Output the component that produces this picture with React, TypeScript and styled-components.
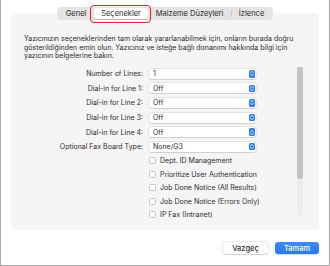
import React from "react"
import styled, { createGlobalStyle } from "styled-components"

const GlobalStyle = createGlobalStyle`
  html, body {
    margin: 0;
    padding: 0;
    background: #ffffff;
  }
  body {
    font-family: "Inter", "Liberation Sans", sans-serif;
    color: #262626;
    -webkit-font-smoothing: antialiased;
  }
`

const tabs = ["Genel", "Seçenekler", "Malzeme Düzeyleri", "İzlence"]

const lines = [
  { label: "Number of Lines:", value: "1" },
  { label: "Dial-in for Line 1:", value: "Off" },
  { label: "Dial-in for Line 2:", value: "Off" },
  { label: "Dial-in for Line 3:", value: "Off" },
  { label: "Dial-in for Line 4:", value: "Off" },
  { label: "Optional Fax Board Type:", value: "None/G3" },
]

const options = [
  "Dept. ID Management",
  "Prioritize User Authentication",
  "Job Done Notice (All Results)",
  "Job Done Notice (Errors Only)",
  "IP Fax (Intranet)",
]

const Stepper = () => (
  <StepperBox>
    <svg width="6" height="7" viewBox="0 0 6 7">
      <path d="M1.6 2.7 L3 1.3 L4.4 2.7" fill="none" stroke="#fff" strokeWidth="0.8" strokeLinecap="round" strokeLinejoin="round" />
      <path d="M1.6 4.3 L3 5.7 L4.4 4.3" fill="none" stroke="#fff" strokeWidth="0.8" strokeLinecap="round" strokeLinejoin="round" />
    </svg>
  </StepperBox>
)

const App = () => {
  return (
    <>
      <GlobalStyle />
      <Window>
        <TabBar>
          {tabs.map((t, i) => (
            <Tab key={t} active={i === 1}>
              {i === 3 && <Divider />}
              {t}
              {i === 1 && <Highlight />}
            </Tab>
          ))}
        </TabBar>
        <Panel>
          <Intro>
            Yazıcınızın seçeneklerinden tam olarak yararlanabilmek için, onların burada doğru
            gösterildiğinden emin olun. Yazıcınız ve isteğe bağlı donanımı hakkında bilgi için
            yazıcının belgelerine bakın.
          </Intro>
          <ScrollArea>
            <FormList>
              {lines.map((l) => (
                <FormRow key={l.label}>
                  <Label>{l.label}</Label>
                  <Select>
                    <span>{l.value}</span>
                    <Stepper />
                  </Select>
                </FormRow>
              ))}
              {options.map((o) => (
                <CheckRow key={o}>
                  <span />
                  <CheckLabel>
                    <Box />
                    {o}
                  </CheckLabel>
                </CheckRow>
              ))}
            </FormList>
            <ScrollTrack>
              <ScrollThumb />
            </ScrollTrack>
          </ScrollArea>
        </Panel>
        <Footer>
          <Button>Vazgeç</Button>
          <Button primary>Tamam</Button>
        </Footer>
      </Window>
    </>
  )
}

export default App

const Window = styled.div`
  width: 330px;
  height: 266px;
  box-sizing: border-box;
  border: 1px solid #a9a9a9;
  border-top: none;
  background: #ffffff;
  padding-top: 7px;
  display: flex;
  flex-direction: column;
  align-items: center;
`

const TabBar = styled.div`
  position: relative;
  z-index: 1;
  display: flex;
  align-items: center;
  height: 13px;
  width: 216px;
  box-sizing: border-box;
  padding: 0 1px 0 1px;
  background: #e4e4e4;
  border-radius: 4px;
`

const Tab = styled.div<{ active?: boolean }>`
  position: relative;
  height: 11px;
  line-height: 11px;
  flex: ${(p) => (p.active ? "0 0 54px" : "1 1 auto")};
  text-align: center;
  font-size: 7.5px;
  color: #2a2a2a;
  border-radius: 3px;
  background: ${(p) => (p.active ? "#ffffff" : "transparent")};
  box-shadow: ${(p) => (p.active ? "0 0.5px 1px rgba(0,0,0,0.18)" : "none")};
`

const Divider = styled.span`
  position: absolute;
  left: 0;
  top: 2px;
  width: 1px;
  height: 7px;
  background: #c8c8c8;
`

const Highlight = styled.div`
  position: absolute;
  left: -4px;
  right: -3px;
  top: -3.5px;
  bottom: -4px;
  border: 1.4px solid #e3202a;
  border-radius: 4px;
`

const Panel = styled.div`
  width: 308px;
  height: 217px;
  box-sizing: border-box;
  margin-top: -7px;
  background: #f5f5f5;
  border-radius: 4px;
  padding: 22px 13px 0 13px;
  display: flex;
  flex-direction: column;
`

const Intro = styled.p`
  margin: 0;
  font-size: 7px;
  line-height: 8.5px;
  color: #2b2b2b;
`

const ScrollArea = styled.div`
  margin-top: 6px;
  height: 155px;
  display: flex;
  overflow: hidden;
`

const FormList = styled.div`
  width: 272px;
  display: flex;
  flex-direction: column;
`

const FormRow = styled.div`
  display: grid;
  grid-template-columns: 119px 107px;
  column-gap: 6px;
  align-items: center;
  height: 14.6px;
`

const Label = styled.div`
  text-align: right;
  font-size: 7px;
  color: #2b2b2b;
`

const Select = styled.div`
  height: 10px;
  box-sizing: border-box;
  background: #ffffff;
  border-radius: 2.5px;
  box-shadow: 0 0 0 0.5px rgba(0, 0, 0, 0.12), 0 0.5px 1px rgba(0, 0, 0, 0.1);
  display: flex;
  align-items: center;
  justify-content: space-between;
  padding: 0 1px 0 4px;
  font-size: 7px;
  color: #2b2b2b;
`

const StepperBox = styled.div`
  width: 6px;
  height: 7.5px;
  border-radius: 1.5px;
  background: #2f7df6;
  display: flex;
  align-items: center;
  justify-content: center;
`

const CheckRow = styled.div`
  display: grid;
  grid-template-columns: 119px 150px;
  column-gap: 6px;
  align-items: center;
  height: 13.5px;
  flex-shrink: 0;
`

const CheckLabel = styled.div`
  display: flex;
  align-items: center;
  gap: 4px;
  font-size: 7px;
  color: #2b2b2b;
  white-space: nowrap;
`

const Box = styled.span`
  width: 7px;
  height: 7px;
  box-sizing: border-box;
  background: #ffffff;
  border: 0.6px solid #c4c4c4;
  border-radius: 1.5px;
`

const ScrollTrack = styled.div`
  margin-left: 1px;
  margin-top: -1px;
  width: 6px;
  height: 150px;
  background: #ececec;
  border-radius: 3px;
`

const ScrollThumb = styled.div`
  width: 6px;
  height: 113px;
  background: #c2c2c2;
  border-radius: 3px;
`

const Footer = styled.div`
  align-self: stretch;
  display: flex;
  justify-content: flex-end;
  gap: 7px;
  padding: 12px 10px 0 0;
`

const Button = styled.button<{ primary?: boolean }>`
  height: 12px;
  width: ${(p) => (p.primary ? "44px" : "45px")};
  padding: 0;
  border: none;
  border-radius: 3px;
  font-family: "Inter", "Liberation Sans", sans-serif;
  font-size: 7.5px;
  font-weight: 500;
  color: ${(p) => (p.primary ? "#ffffff" : "#2b2b2b")};
  background: ${(p) => (p.primary ? "linear-gradient(#3d8bf8, #2a77f3)" : "#ffffff")};
  box-shadow: ${(p) =>
    p.primary
      ? "0 0.5px 1px rgba(0,0,0,0.15)"
      : "0 0 0 0.5px rgba(0,0,0,0.15), 0 0.5px 1px rgba(0,0,0,0.12)"};
`
